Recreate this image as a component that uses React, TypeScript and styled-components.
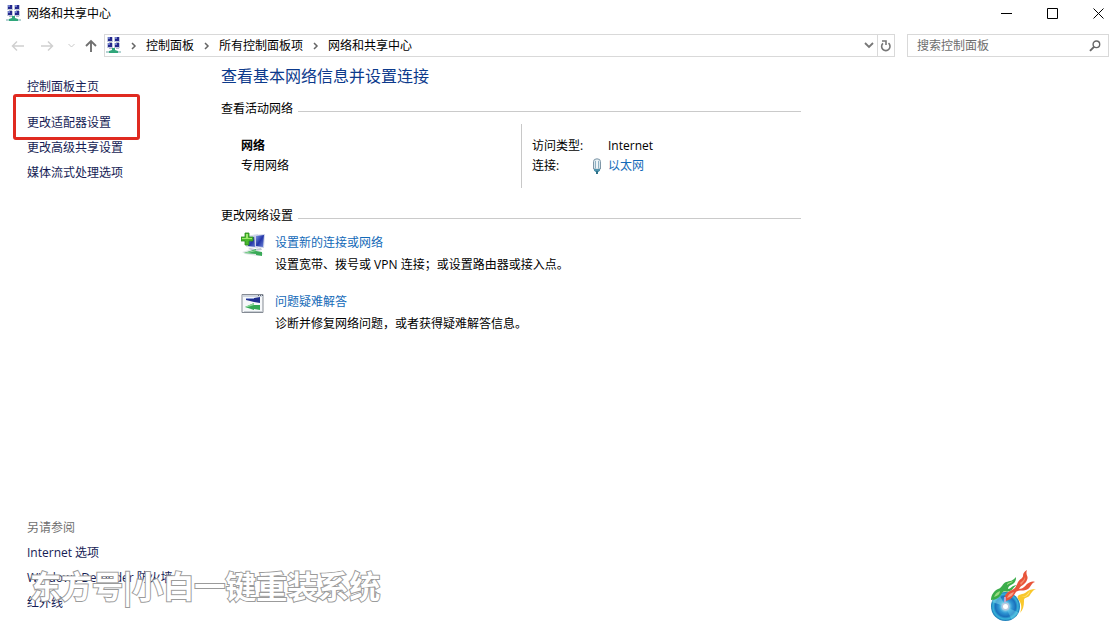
import React from 'react';
import styled, { createGlobalStyle } from 'styled-components';

const GlobalStyle = createGlobalStyle`
  *, *::before, *::after { box-sizing: border-box; }
  body {
    margin: 0;
    background: #fff;
    color: #000;
    font: 12px/20px "Open Sans", "Noto Sans CJK SC", sans-serif;
  }
  h1, h2, h3, p, ul, ol, dl, dd { margin: 0; padding: 0; }
  ul, ol { list-style: none; }
  button, input { font: inherit; color: inherit; }
  svg { display: block; flex: none; }
`;

const Page = styled.div`
  position: relative;
  display: flex;
  flex-direction: column;
  min-height: 100vh;
`;

const TitleBar = styled.header`
  display: flex;
  align-items: center;
  gap: 6px;
  height: 27px;
  padding-left: 6px;
`;

const WindowTitle = styled.span`
  flex: 1;
`;

const WindowButtons = styled.div`
  display: flex;
  gap: 12px;
`;

const IconButton = styled.button<{ $width: number }>`
  display: flex;
  align-items: center;
  justify-content: center;
  width: ${(p) => p.$width}px;
  height: 21px;
  padding: 0;
  border: 0;
  background: none;
`;

const Toolbar = styled.div`
  display: flex;
  gap: 12px;
  padding: 7px 6px 0 5px;
`;

const NavButtons = styled.div`
  display: flex;
  align-items: center;
  width: 99px;
  margin-right: -12px;
`;

const AddressBar = styled.nav`
  display: flex;
  flex: 1;
  align-items: center;
  height: 23px;
  padding-left: 1px;
  border: 1px solid #d9d9d9;
`;

const Crumbs = styled.ol`
  display: flex;
  flex: 1;
  align-items: center;
`;

const Crumb = styled.li`
  display: flex;
  align-items: center;
`;

const CrumbArrow = styled.span`
  display: flex;
  justify-content: center;
  width: 25px;
`;

const CrumbLink = styled.a`
  color: #000;
  text-decoration: none;
`;

const RefreshSlot = styled.div`
  border-left: 1px solid #d9d9d9;
`;

const SearchBox = styled.label`
  display: flex;
  align-items: center;
  width: 202px;
  height: 23px;
  padding: 0 7px 0 9px;
  border: 1px solid #d9d9d9;
`;

const SearchInput = styled.input`
  flex: 1;
  min-width: 0;
  height: 20px;
  padding: 0;
  border: 0;
  outline: 0;
  background: none;
  &::placeholder { color: #6d6d6d; opacity: 1; }
`;

const Body = styled.div`
  display: flex;
  flex: 1;
`;

const Sidebar = styled.aside`
  display: flex;
  flex: none;
  flex-direction: column;
  justify-content: space-between;
  gap: 40px;
  width: 221px;
  padding: 18px 0 14px 27px;
`;

const SideList = styled.ul`
  display: flex;
  flex-direction: column;
  gap: 1px;
  line-height: 24px;
`;

const SideItem = styled.li<{ $home?: boolean }>`
  position: relative;
  margin-bottom: ${(p) => (p.$home ? 11 : 0)}px;
`;

const SideLink = styled.a`
  color: #151c55;
  text-decoration: none;
`;

const SideHeading = styled.h2`
  margin-bottom: 1px;
  color: #707070;
  font-size: 12px;
  font-weight: 400;
  line-height: 24px;
`;

const Marker = styled.span`
  position: absolute;
  top: -17px;
  left: -14px;
  width: 127px;
  height: 46px;
  border: 3px solid #e02a20;
  border-radius: 3px;
  pointer-events: none;
`;

const Main = styled.main`
  flex: 1;
  max-width: 580px;
  padding-top: 9px;
`;

const Heading = styled.h1`
  color: #0c3a8c;
  font-size: 16px;
  font-weight: 400;
  line-height: 20px;
`;

const SectionTitle = styled.h2<{ $gap: number }>`
  display: flex;
  align-items: center;
  gap: 5px;
  margin-top: ${(p) => p.$gap}px;
  font-size: 12px;
  font-weight: 400;
  line-height: 20px;
  &::after {
    content: "";
    flex: 1;
    height: 1px;
    margin-top: 4px;
    background: #cacaca;
  }
`;

const NetworkPanel = styled.div`
  display: flex;
  height: 64px;
  margin-top: 5px;
`;

const NetworkName = styled.div`
  width: 300px;
  padding: 12px 0 0 20px;
`;

const NetworkDetails = styled.dl`
  display: grid;
  grid-template-columns: 60px auto;
  grid-auto-rows: 20px;
  padding: 12px 0 0 10px;
  border-left: 1px solid #c8c8c8;
`;

const Detail = styled.dd`
  display: flex;
  align-items: center;
`;

const DetailIcon = styled.span`
  width: 16px;
`;

const Link = styled.a`
  color: #136ab8;
  text-decoration: none;
`;

const TaskList = styled.ul`
  display: flex;
  flex-direction: column;
  gap: 15px;
  margin-top: 6px;
  padding-left: 20px;
`;

const Task = styled.li`
  display: flex;
  gap: 9px;
  line-height: 22px;
`;

const Watermark = styled.div`
  position: absolute;
  bottom: 22px;
  left: 30px;
  color: #fff;
  font: 700 31px/44px "Noto Sans CJK SC", sans-serif;
  paint-order: stroke fill;
  -webkit-text-stroke: 2px #9b9b9b;
  white-space: nowrap;
  pointer-events: none;
`;

const Logo = styled.div`
  position: absolute;
  right: 76px;
  bottom: 6px;
`;

const Monitor = ({ x, y }: { x: number; y: number }) => (
  <g transform={`translate(${x} ${y})`}>
    <path d="M0 0h6v5H0z" fill="#c3cade" />
    <path d="M1 0h4v4H1z" fill="#25288c" />
    <path d="M1 0h2v2H1z" fill="#6f7ccc" />
    <path d="M2 5h3v1H2z" fill="#b4b9c6" />
  </g>
);

const NetworkIcon = () => (
  <svg width="15" height="17" viewBox="0 0 15 17" aria-hidden="true">
    <Monitor x={1} y={0} />
    <Monitor x={8} y={0} />
    <Monitor x={1} y={6} />
    <Monitor x={8} y={6} />
    <path d="M0 14h15v2H0z" fill="#b4d3d3" />
    <path d="M6 11h3v2l3 1v2H3v-2l3-1z" fill="#2fa67a" />
  </svg>
);

const Arrow = ({ d, color, width = 1.5 }: { d: string; color: string; width?: number }) => (
  <svg width="14" height="14" viewBox="0 0 14 14" fill="none" stroke={color} strokeWidth={width} aria-hidden="true">
    <path d={d} />
  </svg>
);

const CrumbChevron = () => (
  <CrumbArrow>
    <svg width="6" height="8" viewBox="0 0 6 8" fill="none" stroke="#666" strokeWidth="1.5" aria-hidden="true">
      <path d="M1 1l3 3-3 3" />
    </svg>
  </CrumbArrow>
);

const RefreshIcon = () => (
  <svg width="12" height="14" viewBox="0 0 12 14" fill="none" stroke="#777" strokeWidth="1.6" aria-hidden="true">
    <path d="M8.5 4.2A4.2 4.2 0 1 1 3 4.3" />
    <path d="M2 2h4v4" />
  </svg>
);

const SearchIcon = () => (
  <svg width="12" height="12" viewBox="0 0 12 12" fill="none" stroke="#666" aria-hidden="true">
    <circle cx="7.4" cy="4.3" r="3.3" strokeWidth="1.4" />
    <path d="M5 6.8L1 10.8" strokeWidth="1.9" />
  </svg>
);

const PlugIcon = () => (
  <svg width="10" height="16" viewBox="0 0 10 16" aria-hidden="true">
    <path d="M1.5 11V3.500Q1.500.8 5 .8t3.500 2.700V11z" fill="#dbe8ee" stroke="#7f97a8" />
    <path d="M3.500 3v7M6.500 3v7" stroke="#8fb0c2" />
    <path d="M5 2v9" stroke="#fff" />
    <path d="M2 11h6v1.500L6.500 14h-3L2 12.500z" fill="#4f93ad" />
    <path d="M4 13h2v3H4z" fill="#2c7188" />
  </svg>
);

const AddConnectionIcon = () => (
  <svg width="25" height="25" viewBox="0 0 25 25" aria-hidden="true">
    <defs>
      <linearGradient id="screen" x1="0" y1="0" x2="1" y2="1">
        <stop offset="0" stopColor="#7e93e0" />
        <stop offset=".5" stopColor="#2436a8" />
        <stop offset="1" stopColor="#6f88dc" />
      </linearGradient>
    </defs>
    <path d="M5 4l12-2v14L5 15z" fill="#d7dcea" />
    <path d="M7 6l9-2v11l-9-1z" fill="url(#screen)" />
    <path d="M13 3l11-1-1 14-9-1z" fill="#ccd3e8" />
    <path d="M15 4l8-1-1 12-7-1z" fill="url(#screen)" />
    <path d="M9 16l5 1 6-1 1 2-7 1-7-2z" fill="#c0c6d2" />
    <path d="M1 20l7-2 12 2 3 2-6 2-13-2z" fill="#dfe6e6" />
    <path d="M3 21l12-4v2l6 1v4l-6-1v-1z" fill="#39a957" />
    <path d="M3 21l12-3v1l-8 2z" fill="#8ed99a" />
    <path d="M4 1h4v4h4v4H8v4H4V9H0V5h4z" fill="#48b82d" stroke="#28881d" strokeWidth=".8" />
    <path d="M5 2h2v4h4v1H1V6h4z" fill="#9ce96c" />
  </svg>
);

const TroubleshootIcon = () => (
  <svg width="25" height="25" viewBox="0 0 25 25" aria-hidden="true">
    <path d="M1 3.500h21v18H1z" fill="#f6f8fa" stroke="#858b94" />
    <path d="M2 4h20v2H2z" fill="#cfd6df" />
    <path d="M17 4.500h1M19 4.500h1M21 4.500h1" stroke="#5b6372" />
    <path d="M5 7h8l6-1v6l-6-1-8-2z" fill="#20308f" />
    <path d="M5 7h8v1H5z" fill="#8fa0da" />
    <path d="M4 16l9-4v2h6v5l-6-1v1z" fill="#32a852" />
    <path d="M4 16l9-4v2l-6 2z" fill="#90d99d" />
    <path d="M3 20h18v1H3z" fill="#c7cdd3" />
  </svg>
);

const FlameDiscLogo = () => (
  <svg width="49" height="53" viewBox="0 0 49 53" aria-hidden="true">
    <defs>
      <radialGradient id="disc" cx=".5" cy=".5" r=".5">
        <stop offset=".2" stopColor="#8fdcf0" />
        <stop offset=".45" stopColor="#2f98d4" />
        <stop offset=".7" stopColor="#1a70bb" />
        <stop offset=".86" stopColor="#38b4da" />
        <stop offset="1" stopColor="#1775b4" />
      </radialGradient>
    </defs>
    <circle cx="15.500" cy="36.500" r="14.500" fill="url(#disc)" />
    <path d="M15.500 36.500L2 32a14 14 0 0 1 7-8z" fill="#88e0ed" opacity=".5" />
    <path d="M15.500 36.500l13 6a14 14 0 0 1-7 7z" fill="#77d9ee" opacity=".4" />
    <path d="M30 43c2-5 2-9-2-14-1-3 0-4 4-5 4 0 5-5 14-5-5 2-5 6-8 8-3 1-4 1-4 4 0 5-1 9-4 12z" fill="#f9c72c" />
    <path d="M31 27c5 0 6-3 9-6-1 4-4 6-7 6z" fill="#fde680" />
    <path d="M1 30c0-5 3-9 7-11 4-1 4-5 8-7 4-1 7-1 10-5 0 4-1 6-5 8-2 1-3 2-3 4 3 0 4-4 9-4-4 2-4 5-7 6-4 2-6-1-8 2-2 4-5 7-11 7z" fill="#3bad4b" />
    <path d="M4 27c1-3 3-5 6-6 0 3-2 5-6 6z" fill="#9bdb80" />
    <path d="M17 14c2-2 4-2 6-3-1 2-3 2-6 4z" fill="#a4df83" />
    <path d="M14 31c0-6 3-9 8-11 4-2 4-4 6-8 2-3 5-4 5-6 0-3 1-4 4-6-2 5 2 6 0 10-2 5-6 5-8 9 4 0 6-3 8-5 3-2 5-3 8-2-4 1-4 5-7 7-4 3-9 0-12 3-3 5-6 9-12 9z" fill="#e8543a" />
    <path d="M17 28c1-3 3-5 7-6-1 3-3 5-7 6z" fill="#f6a188" />
    <path d="M30 13c2-2 4-3 5-6 1 3-2 5-4 8z" fill="#f58d6c" />
    <circle cx="15.500" cy="36.500" r="4" fill="#b6c8df" />
    <circle cx="15.500" cy="36.500" r="2.500" fill="#fff" />
    <path d="M14 27h2v5h-2z" fill="#b9a3d2" />
  </svg>
);

const crumbs = ['控制面板', '所有控制面板项', '网络和共享中心'];
const settings = ['更改适配器设置', '更改高级共享设置', '媒体流式处理选项'];
const related = ['Internet 选项', 'Windows Defender 防火墙', '红外线'];

export default function App() {
  return (
    <Page lang="zh-CN">
      <GlobalStyle />
      <TitleBar>
        <NetworkIcon />
        <WindowTitle>网络和共享中心</WindowTitle>
        <WindowButtons>
          <IconButton $width={34} aria-label="最小化">
            <svg width="11" height="11" fill="none" stroke="#000"><path d="M0 5.500h11" /></svg>
          </IconButton>
          <IconButton $width={34} aria-label="最大化">
            <svg width="11" height="11" fill="none" stroke="#000"><path d="M.5.5h10v10H.5z" /></svg>
          </IconButton>
          <IconButton $width={34} aria-label="关闭">
            <svg width="11" height="11" fill="none" stroke="#000"><path d="M.5.5l10 10M10.500.5l-10 10" /></svg>
          </IconButton>
        </WindowButtons>
      </TitleBar>

      <Toolbar>
        <NavButtons>
          <IconButton $width={25} aria-label="后退"><Arrow color="#d0d0d0" d="M13 7H2M6 2.500L1.500 7 6 11.500" /></IconButton>
          <IconButton $width={34} aria-label="前进"><Arrow color="#d0d0d0" d="M1 7h11M8 2.500L12.500 7 8 11.500" /></IconButton>
          <IconButton $width={14} aria-label="最近的位置">
            <svg width="7" height="5" fill="none" stroke="#c8c8c8"><path d="M.5 1l3 3 3-3" /></svg>
          </IconButton>
          <IconButton $width={26} aria-label="向上"><Arrow color="#707070" width={1.9} d="M7 13V2M2 7l5-5 5 5" /></IconButton>
        </NavButtons>
        <AddressBar aria-label="地址">
          <NetworkIcon />
          <Crumbs>
            {crumbs.map((name) => (
              <Crumb key={name}>
                <CrumbChevron />
                <CrumbLink href="#">{name}</CrumbLink>
              </Crumb>
            ))}
          </Crumbs>
          <IconButton $width={16} aria-label="以前的位置">
            <svg width="10" height="7" fill="none" stroke="#777" strokeWidth="1.800"><path d="M1 1l4 4 4-4" /></svg>
          </IconButton>
          <RefreshSlot>
            <IconButton $width={16} aria-label="刷新"><RefreshIcon /></IconButton>
          </RefreshSlot>
        </AddressBar>
        <SearchBox>
          <SearchInput type="search" placeholder="搜索控制面板" aria-label="搜索控制面板" />
          <SearchIcon />
        </SearchBox>
      </Toolbar>

      <Body>
        <Sidebar>
          <SideList>
            <SideItem $home><SideLink href="#">控制面板主页</SideLink></SideItem>
            {settings.map((name, i) => (
              <SideItem key={name}>
                <SideLink href="#">{name}</SideLink>
                {i === 0 && <Marker />}
              </SideItem>
            ))}
          </SideList>
          <div>
            <SideHeading>另请参阅</SideHeading>
            <SideList>
              {related.map((name) => (
                <SideItem key={name}><SideLink href="#">{name}</SideLink></SideItem>
              ))}
            </SideList>
          </div>
        </Sidebar>

        <Main>
          <Heading>查看基本网络信息并设置连接</Heading>
          <SectionTitle $gap={13}>查看活动网络</SectionTitle>
          <NetworkPanel>
            <NetworkName>
              <strong>网络</strong>
              <p>专用网络</p>
            </NetworkName>
            <NetworkDetails>
              <dt>访问类型:</dt>
              <Detail><DetailIcon />Internet</Detail>
              <dt>连接:</dt>
              <Detail><DetailIcon><PlugIcon /></DetailIcon><Link href="#">以太网</Link></Detail>
            </NetworkDetails>
          </NetworkPanel>

          <SectionTitle $gap={18}>更改网络设置</SectionTitle>
          <TaskList>
            <Task>
              <AddConnectionIcon />
              <div>
                <Link href="#">设置新的连接或网络</Link>
                <p>设置宽带、拨号或 VPN 连接；或设置路由器或接入点。</p>
              </div>
            </Task>
            <Task>
              <TroubleshootIcon />
              <div>
                <Link href="#">问题疑难解答</Link>
                <p>诊断并修复网络问题，或者获得疑难解答信息。</p>
              </div>
            </Task>
          </TaskList>
        </Main>
      </Body>

      <Watermark>东方号|小白一键重装系统</Watermark>
      <Logo><FlameDiscLogo /></Logo>
    </Page>
  );
}
